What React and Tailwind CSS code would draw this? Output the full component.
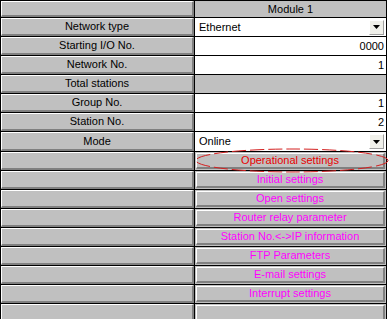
const labels = [
  { label: "Network type", kind: "select", value: "Ethernet" },
  { label: "Starting I/O No.", kind: "input", value: "0000" },
  { label: "Network No.", kind: "input", value: "1" },
  { label: "Total stations", kind: "disabled" },
  { label: "Group No.", kind: "input", value: "1" },
  { label: "Station No.", kind: "input", value: "2" },
  { label: "Mode", kind: "select", value: "Online", tall: true },
  { label: "", kind: "button", value: "Operational settings", red: true },
  { label: "", kind: "button", value: "Initial settings" },
  { label: "", kind: "button", value: "Open settings" },
  { label: "", kind: "button", value: "Router relay parameter" },
  { label: "", kind: "button", value: "Station No.<->IP information" },
  { label: "", kind: "button", value: "FTP Parameters" },
  { label: "", kind: "button", value: "E-mail settings" },
  { label: "", kind: "button", value: "Interrupt settings" },
  { label: "", kind: "button", value: "" },
];

const raised = "border-t border-l border-t-white border-l-white border-b-2 border-r-2 border-b-[#808080] border-r-[#808080] bg-[#c0c0c0]";

const DropArrow = () => (
  <div className="w-[15px] h-[15px] mr-[2px] bg-[#f0f0ea] border-t border-l border-t-white border-l-white border-b border-r border-b-[#a0a0a0] border-r-[#a0a0a0] flex items-center justify-center">
    <svg width="7" height="4" viewBox="0 0 7 4">
      <path d="M0 0H7L3.5 4Z" fill="#000" />
    </svg>
  </div>
);

const ValueCell = ({ row }) => {
  if (row.kind === "select") {
    return (
      <div className="h-full bg-white flex items-center justify-between pl-[4px]">
        <span>{row.value}</span>
        <DropArrow />
      </div>
    );
  }
  if (row.kind === "input") {
    return <div className="h-full bg-white flex items-center justify-end pr-[2px]">{row.value}</div>;
  }
  if (row.kind === "disabled") {
    return <div className="h-full bg-[#c0c0c0]" />;
  }
  return (
    <div className="h-full bg-[#c0c0c0] p-px">
      <div className={`h-full flex items-center justify-center ${raised} ${row.red ? "text-[#e80000]" : "text-[#ff00ff]"}`}>
        {row.value}
      </div>
    </div>
  );
};

export default function App() {
  return (
    <div className="w-[389px] h-[319px] overflow-hidden bg-white text-[11px] text-black font-['Liberation_Sans',Arial,sans-serif] leading-none">
      <div className="relative w-[387px] border-t border-l border-r border-black">
        {/* header */}
        <div className="flex h-[17px] border-b border-black">
          <div className={`w-[193px] h-full ${raised}`} />
          <div className="flex-1 h-full border-l border-black bg-[#c0c0c0] flex items-center justify-center">Module 1</div>
        </div>

        {labels.map((row, i) => (
          <div key={i} className={`flex ${row.tall ? "h-[20px]" : "h-[19px]"} border-b border-black`}>
            <div className={`w-[193px] h-full flex items-center justify-center ${raised}`}>{row.label}</div>
            <div className="flex-1 h-full border-l border-black">
              <ValueCell row={row} />
            </div>
          </div>
        ))}

        {/* annotation around Operational settings */}
        <svg className="absolute left-[194px] top-[147px] pointer-events-none" width="195" height="26" viewBox="0 0 195 26">
          <ellipse cx="97" cy="12.5" rx="96" ry="11.5" fill="none" stroke="#d42020" strokeWidth="1" strokeDasharray="14 4" />
        </svg>
      </div>
    </div>
  );
}
